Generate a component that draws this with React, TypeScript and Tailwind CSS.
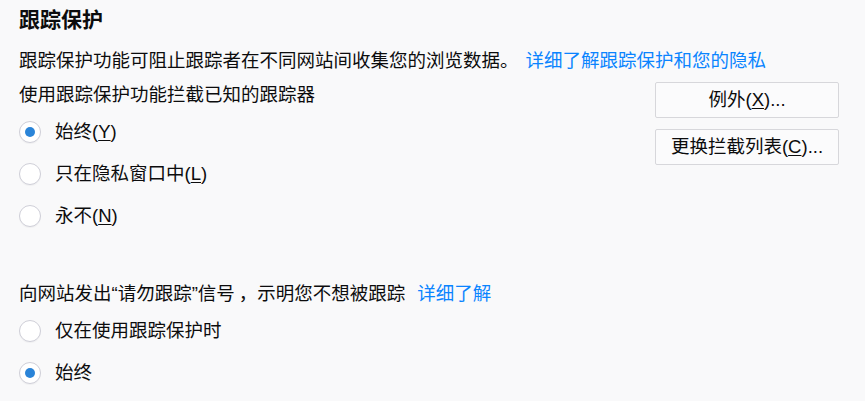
const font = { fontFamily: '"Liberation Sans", "Noto Sans CJK SC", sans-serif' };

function Radio({ checked, label, accel }: { checked?: boolean; label: string; accel?: string }) {
  return (
    <label className="flex h-[42px] items-center gap-[14px]">
      <span className="flex h-[22px] w-[22px] items-center justify-center rounded-full border border-[#cfcfd8] bg-white shadow-[0_1px_1px_rgba(0,0,0,0.04)]">
        {checked && <span className="h-[10px] w-[10px] rounded-full bg-[#2a84d8]" />}
      </span>
      <span>
        {label}
        {accel && (
          <>
            (<span className="underline underline-offset-2">{accel}</span>)
          </>
        )}
      </span>
    </label>
  );
}

function Button({ label, accel }: { label: string; accel: string }) {
  return (
    <button className="flex h-[36px] w-[184px] items-center justify-center rounded-[2px] border border-[#d7d7db] bg-[#fbfbfc] text-[#0c0c0d]">
      {label}(<span className="underline underline-offset-2">{accel}</span>)...
    </button>
  );
}

export default function App() {
  return (
    <div style={font} className="h-[401px] w-[865px] overflow-hidden bg-[#f9f9fa] pl-[19px] pr-[26px] pt-[6px] text-[18.5px] leading-[24px] text-[#0c0c0d]">
      <h1 className="text-[21px] font-bold leading-[28px]">跟踪保护</h1>

      <p className="mt-[15px]">
        跟踪保护功能可阻止跟踪者在不同网站间收集您的浏览数据。
        <a className="ml-[7px] text-[#0a84ff]">详细了解跟踪保护和您的隐私</a>
      </p>

      <div className="mt-[9px] flex justify-between">
        <div className="pt-[1px]">
          <p className="mb-[4px]">使用跟踪保护功能拦截已知的跟踪器</p>
          <Radio checked label="始终" accel="Y" />
          <Radio label="只在隐私窗口中" accel="L" />
          <Radio label="永不" accel="N" />
        </div>
        <div className="flex flex-col gap-[11px]">
          <Button label="例外" accel="X" />
          <Button label="更换拦截列表" accel="C" />
        </div>
      </div>

      <p className="mt-[45px]">
        向网站发出“请勿跟踪”信号<span className="ml-[4px]">，</span>示明您不想被跟踪
        <a className="ml-[12px] text-[#0a84ff]">详细了解</a>
      </p>
      <div className="mt-[4px]">
        <Radio label="仅在使用跟踪保护时" />
        <Radio checked label="始终" />
      </div>
    </div>
  );
}
